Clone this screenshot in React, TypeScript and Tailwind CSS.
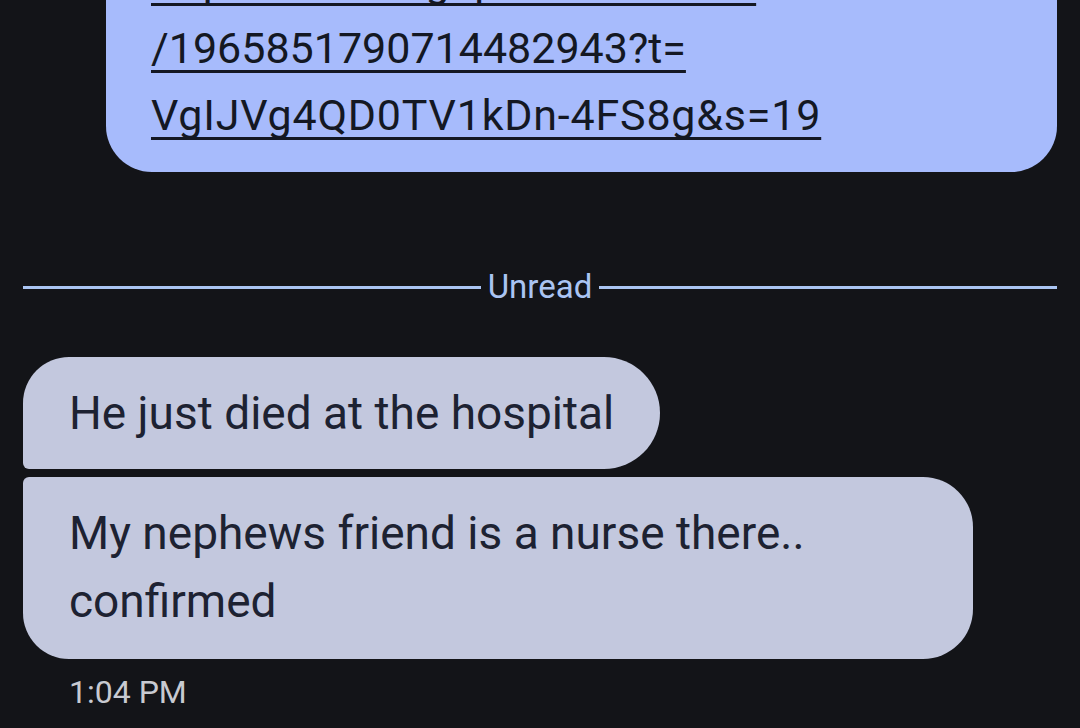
export default function App() {
  return (
    <div
      className="w-[1080px] h-[728px] overflow-hidden bg-[#131418] flex flex-col"
      style={{ fontFamily: "Roboto, 'Liberation Sans', sans-serif" }}
    >
      {/* outgoing link bubble, cut off at top */}
      <div className="ml-[106px] mr-[23px] mt-[-61px] rounded-b-[46px] bg-[#a7bbfc] pl-[45px] pr-[40px] pt-[9px] pb-[23px]">
        <p className="text-[43px] leading-[67px] text-[#141823] underline decoration-[3px] underline-offset-[7px] [text-decoration-skip-ink:none] break-all">
          <span className="block">https://x.com/gop_news/status</span>
          <span className="block">/1965851790714482943?t=</span>
          <span className="block tracking-[0.8px]">VgIJVg4QD0TV1kDn-4FS8g&amp;s=19</span>
        </p>
      </div>

      {/* unread divider */}
      <div className="mt-[95px] flex items-center gap-[7px] px-[23px]">
        <div className="h-[3px] flex-1 bg-[#aac4f2]" />
        <span className="text-[33px] leading-[40px] text-[#aac4f2]">Unread</span>
        <div className="h-[3px] flex-1 bg-[#aac4f2]" />
      </div>

      {/* incoming messages */}
      <div className="mt-[50px] flex flex-col items-start gap-[8px] px-[23px]">
        <div className="rounded-tl-[46px] rounded-tr-[56px] rounded-br-[56px] rounded-bl-[6px] bg-[#c3c8de] pl-[46px] pr-[46px] py-[28px] h-[112px]">
          <p className="text-[46px] leading-[56px] text-[#1d2232]">He just died at the hospital</p>
        </div>
        <div className="w-[950px] rounded-tl-[6px] rounded-tr-[50px] rounded-br-[50px] rounded-bl-[46px] bg-[#c3c8de] pl-[46px] pr-[46px] pt-[22px] pb-[24px]">
          <p className="text-[46px] leading-[68px] text-[#1d2232]">
            My nephews friend is a nurse there..
            <br />
            confirmed
          </p>
        </div>
        <p className="mt-[7px] pl-[46px] text-[32px] leading-[36px] text-[#c8cad1]">1:04 PM</p>
      </div>
    </div>
  );
}
